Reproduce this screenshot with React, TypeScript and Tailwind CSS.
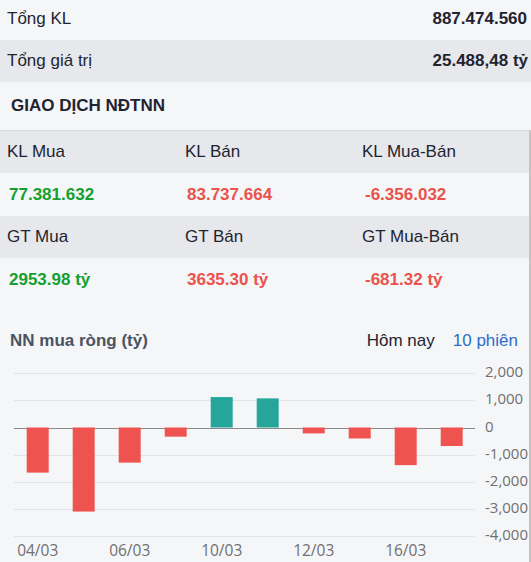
import React from "react";

const bars = [-1662, -3096, -1294, -338, 1121, 1073, -217, -404, -1386, -681];
const ticks = [2000, 1000, 0, -1000, -2000, -3000, -4000];
const xLabels: [number, string][] = [
  [0, "04/03"],
  [2, "06/03"],
  [4, "10/03"],
  [6, "12/03"],
  [8, "16/03"],
];

const ZERO = 74.5;
const SCALE = 27.15 / 1000;
const yOf = (v: number) => ZERO - v * SCALE;

function Chart() {
  return (
    <svg width={529} height={208} className="block" style={{ fontFamily: '"Open Sans", sans-serif' }}>
      {ticks.map((t) => {
        const y = Math.round(yOf(t)) + 0.5;
        return (
          <g key={t}>
            <line
              x1={14}
              x2={475}
              y1={y}
              y2={y}
              stroke={t === 0 ? "#8a8a8a" : "#e2e4e8"}
              strokeWidth={1}
            />
            <text x={485} y={y - 1} dominantBaseline="middle" fontSize={15} fill="#707070">
              {t.toLocaleString("en-US")}
            </text>
          </g>
        );
      })}
      {bars.map((v, i) => {
        const x = 26.7 + i * 46;
        const y0 = yOf(0);
        const y1 = yOf(v);
        return (
          <rect
            key={i}
            x={x}
            width={22}
            y={Math.min(y0, y1)}
            height={Math.abs(y1 - y0)}
            fill={v >= 0 ? "#26a69a" : "#ef5350"}
          />
        );
      })}
      {xLabels.map(([i, l]) => (
        <text
          key={l}
          x={37.7 + i * 46}
          y={199}
          textAnchor="middle"
          dominantBaseline="middle"
          fontSize={15.5}
          fill="#707070"
        >
          {l}
        </text>
      ))}
    </svg>
  );
}

function Cell({ children, cls }: { children: React.ReactNode; cls?: string }) {
  return <div className={"flex items-center " + (cls ?? "")}>{children}</div>;
}

export default function App() {
  return (
    <div
      className="w-[531px] h-[562px] overflow-hidden bg-[#f5f6f8] text-[17px] text-[#1f2430]"
      style={{ fontFamily: '"Liberation Sans", Arial, sans-serif' }}
    >
      <div className="-mt-[2px] h-[42px] flex items-center justify-between pl-[7px] pr-[4px]">
        <span>Tổng KL</span>
        <span className="font-bold">887.474.560</span>
      </div>
      <div className="h-[42px] flex items-center justify-between pl-[7px] pr-[3px] bg-[#e6e8ec]">
        <span>Tổng giá trị</span>
        <span className="font-bold">25.488,48 tỷ</span>
      </div>
      <div className="h-[48px] flex items-center pl-[11px] font-bold">GIAO DỊCH NĐTNN</div>
      <div className="border-t border-[#d5d8dd] border-r-2 border-r-[#c4c4c4] h-[432px]">
        <div className="grid grid-cols-[177px_177px_1fr] h-[42px] bg-[#e6e8ec]">
          <Cell cls="pl-[7px]">KL Mua</Cell>
          <Cell cls="pl-[8px]">KL Bán</Cell>
          <Cell cls="pl-[8px]">KL Mua-Bán</Cell>
        </div>
        <div className="grid grid-cols-[177px_177px_1fr] h-[43px] font-bold">
          <Cell cls="pl-[9px] text-[#14a02e]">77.381.632</Cell>
          <Cell cls="pl-[10px] text-[#e9534b]">83.737.664</Cell>
          <Cell cls="pl-[11px] text-[#e9534b]">-6.356.032</Cell>
        </div>
        <div className="grid grid-cols-[177px_177px_1fr] h-[42px] bg-[#e6e8ec]">
          <Cell cls="pl-[7px]">GT Mua</Cell>
          <Cell cls="pl-[8px]">GT Bán</Cell>
          <Cell cls="pl-[8px]">GT Mua-Bán</Cell>
        </div>
        <div className="grid grid-cols-[177px_177px_1fr] h-[43px] font-bold">
          <Cell cls="pl-[9px] text-[#14a02e]">2953.98 tỷ</Cell>
          <Cell cls="pl-[10px] text-[#e9534b]">3635.30 tỷ</Cell>
          <Cell cls="pl-[11px] text-[#e9534b]">-681.32 tỷ</Cell>
        </div>
        <div className="mt-[28px] h-[24px] flex items-center justify-between pl-[10px] pr-[11px]">
          <span className="font-bold text-[#4b5362]">NN mua ròng (tỷ)</span>
          <div className="flex items-center gap-[18px]">
            <span className="text-[#1f2430]">Hôm nay</span>
            <span className="text-[#2f6bc9]">10 phiên</span>
          </div>
        </div>
        <Chart />
      </div>
    </div>
  );
}
